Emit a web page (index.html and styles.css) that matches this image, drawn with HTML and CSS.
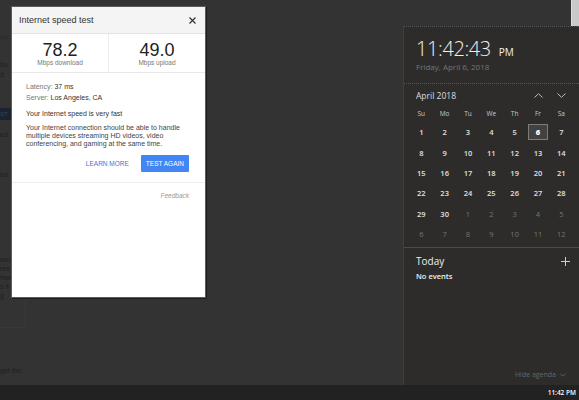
FILE: index.html
```html
<!DOCTYPE html>
<html>
<head>
<meta charset="utf-8">
<link rel="stylesheet" href="styles.css">
</head>
<body>
<div class="desktop">
  <div class="bgpage">
    <div class="frag f-49">49</div>
    <div class="frag f-be">be</div>
    <div class="frag f-d">d</div>
    <div class="frag-box">ST</div>
    <div class="frag f-ed">ed</div>
    <div class="frag f-nd">nd</div>
    <div class="frag-lines">
      <div>wel</div><div>ree</div><div>rker</div><div>s it</div><div>g</div>
    </div>
    <div class="frag-dotbox"></div>
    <div class="frag f-get">get the</div>
  </div>
  <div class="scrollbar"></div>

  <div class="dialog">
    <div class="dlg-head">
      <span class="dlg-title">Internet speed test</span>
      <svg class="dlg-close" width="7" height="7" viewBox="0 0 7 7"><path d="M0.5 0.5L6.5 6.5M6.5 0.5L0.5 6.5" stroke="#333" stroke-width="1.2" fill="none"/></svg>
    </div>
    <div class="results">
      <div class="res res-left">
        <div class="res-num">78.2</div>
        <div class="res-label">Mbps download</div>
      </div>
      <div class="res">
        <div class="res-num">49.0</div>
        <div class="res-label">Mbps upload</div>
      </div>
    </div>
    <div class="info">
      <div class="info-line"><span class="lbl">Latency:</span> 37 ms</div>
      <div class="info-line"><span class="lbl">Server:</span> Los Angeles, CA</div>
      <div class="verdict">Your Internet speed is very fast</div>
      <p class="desc">Your Internet connection should be able to handle<br>multiple devices streaming HD videos, video<br>conferencing, and gaming at the same time.</p>
      <div class="actions">
        <span class="btn btn-flat">LEARN MORE</span>
        <span class="btn btn-raised">TEST AGAIN</span>
      </div>
    </div>
    <div class="dlg-foot">Feedback</div>
  </div>

  <div class="flyout">
    <div class="clockbox">
      <div class="time">11:42:43<span class="ampm">PM</span></div>
      <div class="date">Friday, April 6, 2018</div>
    </div>
    <div class="cal-section">
      <div class="month-row">
        <span class="month">April 2018</span>
        <span class="chev"><svg width="9" height="5" viewBox="0 0 9 5"><path d="M0.5 4.5L4.5 0.7L8.5 4.5" stroke="#bdbdbd" stroke-width="1" fill="none"/></svg></span>
        <span class="chev"><svg width="9" height="5" viewBox="0 0 9 5"><path d="M0.5 0.5L4.5 4.3L8.5 0.5" stroke="#bdbdbd" stroke-width="1" fill="none"/></svg></span>
      </div>
      <div class="cal cal-head">
        <span>Su</span><span>Mo</span><span>Tu</span><span>We</span><span>Th</span><span>Fr</span><span>Sa</span>
      </div>
      <div class="cal cal-days">
        <span>1</span><span>2</span><span>3</span><span>4</span><span>5</span><span class="today"><b>6</b></span><span>7</span>
        <span>8</span><span>9</span><span>10</span><span>11</span><span>12</span><span>13</span><span>14</span>
        <span>15</span><span>16</span><span>17</span><span>18</span><span>19</span><span>20</span><span>21</span>
        <span>22</span><span>23</span><span>24</span><span>25</span><span>26</span><span>27</span><span>28</span>
        <span>29</span><span>30</span><span class="other">1</span><span class="other">2</span><span class="other">3</span><span class="other">4</span><span class="other">5</span>
        <span class="other">6</span><span class="other">7</span><span class="other">8</span><span class="other">9</span><span class="other">10</span><span class="other">11</span><span class="other">12</span>
      </div>
    </div>
    <div class="agenda">
      <div class="agenda-head">
        <span class="today-title">Today</span>
        <svg width="9" height="9" viewBox="0 0 9 9"><path d="M4.5 0V9M0 4.5H9" stroke="#d0d0d0" stroke-width="1" fill="none"/></svg>
      </div>
      <div class="no-events">No events</div>
    </div>
    <div class="hide-agenda">Hide agenda <svg width="6" height="4" viewBox="0 0 6 4"><path d="M0.5 0.8L3 3.2L5.5 0.8" stroke="#666" stroke-width="0.9" fill="none"/></svg></div>
  </div>
</div>
<div class="taskbar"><span class="tb-clock">11:42 PM</span></div>
</body>
</html>
```

FILE: styles.css
```css
html, body {
  margin: 0;
  padding: 0;
}
body {
  width: 579px;
  height: 400px;
  overflow: hidden;
  background: #333333;
  font-family: "Liberation Sans", Arial, sans-serif;
}
.desktop {
  position: relative;
  height: 385px;
  display: flex;
}
.bgpage {
  flex: 1;
  overflow: hidden;
  font-size: 7px;
  color: #1f1f1f;
}
.frag {
  line-height: 10px;
  height: 10px;
}
.f-49 { margin-top: 33px; color: #22293a; }
.f-be { margin-top: 17px; }
.f-d { margin-top: 0; }
.frag-box {
  margin-top: 28px;
  width: 11px;
  height: 12px;
  line-height: 12px;
  background: #1b2230;
  color: #3a4558;
  font-size: 6px;
}
.f-ed { margin-top: 10px; }
.f-nd { margin-top: 30px; }
.frag-lines {
  margin-top: 75px;
  line-height: 9px;
}
.frag-dotbox {
  width: 25px;
  height: 27px;
  border-right: 1px dotted #3d3d3d;
  border-bottom: 1px dotted #3d3d3d;
}
.f-get { margin-top: 38px; }
.scrollbar {
  width: 7px;
  background: #c9c9c9;
  border-left: 1px solid #e0e0e0;
}

/* dialog */
.dialog {
  position: absolute;
  left: 11px;
  top: 6px;
  width: 195px;
  height: 292px;
  box-sizing: border-box;
  background: #ffffff;
  border: 1px solid #5c5c5c;
  box-shadow: 1px 1px 0 #1e1e1e;
}
.dlg-head {
  height: 26px;
  display: flex;
  align-items: center;
  justify-content: space-between;
  padding: 0 9px 0 7px;
  background: #f4f4f4;
  border-bottom: 1px solid #e4e4e4;
}
.dlg-title {
  font-size: 9px;
  color: #333333;
}
.results {
  display: flex;
  height: 38px;
  border-bottom: 1px solid #e8e8e8;
}
.res {
  flex: 1;
  text-align: center;
  padding-top: 7px;
}
.res-left {
  border-right: 1px solid #ececec;
}
.res-num {
  font-size: 18px;
  line-height: 18px;
  color: #222222;
}
.res-label {
  font-size: 6.5px;
  line-height: 8px;
  color: #777777;
}
.info {
  padding: 8px 16px 0 14px;
  font-size: 7px;
  color: #333333;
}
.info-line {
  line-height: 11px;
}
.lbl {
  color: #777777;
}
.verdict {
  margin-top: 5px;
  line-height: 11px;
  color: #333333;
}
.desc {
  margin: 5px 0 0;
  line-height: 8px;
  color: #444444;
  white-space: nowrap;
}
.actions {
  margin-top: 7px;
  display: flex;
  justify-content: flex-end;
  gap: 7px;
}
.btn {
  height: 17px;
  line-height: 17px;
  padding: 0 5px;
  font-size: 6.5px;
  border-radius: 1px;
}
.btn-flat {
  color: #4a72d8;
}
.btn-raised {
  background: #4285f4;
  color: #ffffff;
}
.dlg-foot {
  margin-top: 10px;
  border-top: 1px solid #eeeeee;
  padding: 8px 16px 0;
  text-align: right;
  font-size: 6.5px;
  line-height: 10px;
  font-style: italic;
  color: #999999;
}

/* calendar flyout */
.flyout {
  position: absolute;
  left: 403px;
  top: 26px;
  width: 176px;
  height: 359px;
  box-sizing: border-box;
  background: #2d2c2b;
  border-top: 1px dotted #555555;
  border-left: 1px solid #3f3f3f;
  font-family: "Open Sans", "Noto Sans", sans-serif;
  color: #ffffff;
  display: flex;
  flex-direction: column;
}
.clockbox {
  padding: 10px 0 0 12px;
}
.time {
  font-size: 20px;
  font-weight: 300;
  line-height: 24px;
  letter-spacing: -0.4px;
  color: #f0f0f0;
}
.ampm {
  font-size: 10px;
  font-weight: 400;
  letter-spacing: 0;
  margin-left: 8px;
}
.date {
  margin-top: -3px;
  font-size: 8px;
  line-height: 12px;
  color: #767676;
}
.cal-section {
  margin-top: 10px;
  border-top: 1px dotted #555555;
  padding-top: 5px;
}
.month-row {
  display: flex;
  align-items: center;
  height: 12px;
  padding: 0 6px 0 12px;
}
.month {
  flex: 1;
  font-size: 8.5px;
  color: #dedede;
}
.chev {
  width: 23.33px;
  display: flex;
  justify-content: center;
}
.cal {
  display: grid;
  grid-template-columns: repeat(7, 23.33px);
  padding-left: 5.67px;
  text-align: center;
}
.cal-head {
  margin-top: 8px;
  font-size: 6.5px;
  line-height: 10px;
  color: #c8c8c8;
}
.cal-days {
  margin-top: 3px;
  grid-auto-rows: 20.4px;
  font-size: 7.5px;
  font-weight: 600;
  color: #e0e0e0;
}
.cal-days span {
  display: flex;
  align-items: center;
  justify-content: center;
}
.cal-days .other {
  color: #747474;
  font-weight: 400;
}
.today b {
  width: 20px;
  height: 16px;
  box-sizing: border-box;
  display: flex;
  align-items: center;
  justify-content: center;
  background: #434241;
  border: 1px solid #7c7c7c;
  color: #ffffff;
}
.agenda {
  margin-top: 3px;
  border-top: 1px solid #4a4a4a;
  padding: 6px 9px 0 12px;
}
.agenda-head {
  display: flex;
  align-items: center;
  justify-content: space-between;
  height: 14px;
}
.today-title {
  font-size: 10px;
  color: #eeeeee;
}
.no-events {
  margin-top: 3px;
  font-size: 7.5px;
  line-height: 10px;
  font-weight: 600;
  color: #f0f0f0;
}
.hide-agenda {
  margin-top: auto;
  margin-bottom: 4px;
  padding-right: 13px;
  display: flex;
  justify-content: flex-end;
  align-items: center;
  gap: 4px;
  font-size: 7px;
  line-height: 12px;
  color: #666666;
}

/* taskbar */
.taskbar {
  height: 15px;
  background: #222222;
  display: flex;
  justify-content: flex-end;
  align-items: center;
  padding-right: 3px;
}
.tb-clock {
  font-family: "Open Sans", "Noto Sans", sans-serif;
  font-size: 6.5px;
  font-weight: 600;
  color: #ffffff;
}
```
